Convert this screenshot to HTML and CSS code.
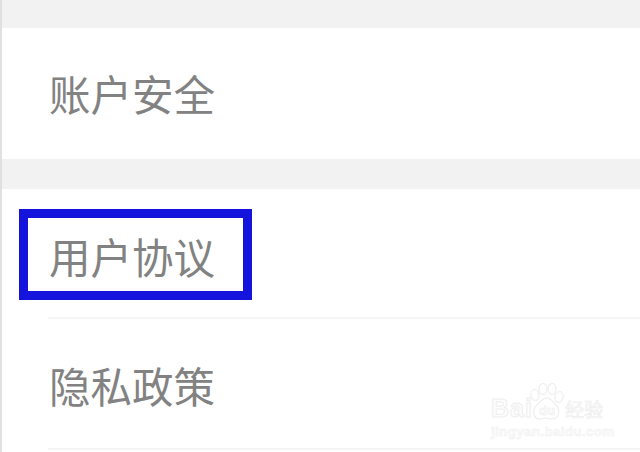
FILE: index.html
```html
<!DOCTYPE html>
<html lang="zh-CN">
<head>
<meta charset="utf-8">
<title>设置</title>
<link rel="stylesheet" href="styles.css">
</head>
<body>
<main class="screen">
  <div class="band band-top"></div>
  <section class="group group-one">
    <div class="row row-first">账户安全</div>
  </section>
  <div class="band band-mid"></div>
  <section class="group">
    <div class="row row-agreement">
      <span class="row-text">用户协议</span>
      <span class="highlight"></span>
    </div>
    <div class="divider"></div>
    <div class="row row-privacy">隐私政策</div>
    <div class="divider divider-last"></div>
  </section>
  <div class="watermark" aria-label="Baidu经验 jingyan.baidu.com">
    <div class="wm-top">
      <span class="wm-bai">Bai</span>
      <svg class="wm-paw" viewBox="0 0 36 38" width="36" height="38">
        <g fill="#fff" stroke="#f0f0f0" stroke-width="1.4">
          <ellipse cx="6" cy="12" rx="4" ry="5.5" transform="rotate(-15 6 12)"/>
          <ellipse cx="14" cy="6" rx="4" ry="5.5"/>
          <ellipse cx="23" cy="6" rx="4" ry="5.5"/>
          <ellipse cx="30" cy="14" rx="4" ry="5.5" transform="rotate(15 30 14)"/>
          <path d="M18 15c4 0 6 4 9 7 4 4 4 14-4 14-3 0-4-1-6-1s-3 1-6 1c-7 0-8-9-4-13 3-3 6-8 11-8z"/>
        </g>
        <text x="18" y="32" class="wm-du">du</text>
      </svg>
      <span class="wm-jy">经验</span>
    </div>
    <div class="wm-url">jingyan.baidu.com</div>
  </div>
</main>
</body>
</html>
```

FILE: styles.css
```css
* { box-sizing: border-box; }
html, body { margin: 0; padding: 0; background: #fff; }
.screen {
  position: relative;
  width: 640px;
  height: 452px;
  overflow: hidden;
  background: #fff;
  border-left: 2px solid #e0e0e0;
  font-family: "Noto Sans CJK SC", "Noto Sans", sans-serif;
}
.band { background: #f2f2f2; }
.band-top { height: 28px; }
.band-mid { height: 30px; }
.group-one { height: 131px; }
.row {
  display: flex;
  align-items: center;
  padding-left: 47px;
  font-size: 41.5px;
  font-weight: 400;
  line-height: 48px;
  color: #828282;
}
.row-first { height: 131px; padding-bottom: 2px; }
.row-agreement { position: relative; height: 128px; padding-top: 6px; }
.row-privacy { height: 129px; padding-top: 2px; }
.highlight {
  position: absolute;
  left: 17px;
  top: 20px;
  width: 233px;
  height: 91px;
  border: 9px solid #1414dc;
}
.divider { height: 2px; margin-left: 46px; background: #f5f5f5; }
.watermark {
  position: absolute;
  left: 489px;
  top: 383px;
  width: 120px;
  color: #fff;
}
.wm-top { display: flex; align-items: flex-end; height: 38px; }
.wm-bai {
  width: 38px;
  font: bold 25px/26px "Liberation Sans", sans-serif;
  letter-spacing: 1px;
  color: #fdfdfd;
  -webkit-text-stroke: 1px #efefef;
}
.wm-paw { flex: none; }
.wm-du {
  font: bold 13px "Liberation Sans", sans-serif;
  text-anchor: middle;
  fill: #fff;
  stroke: #ececec;
  stroke-width: 0.6;
}
.wm-jy {
  font-size: 19px;
  line-height: 24px;
  color: #fcfcfc;
  -webkit-text-stroke: 0.6px #ececec;
}
.wm-url {
  margin-top: 3px;
  font: bold 13.5px/15px "Liberation Sans", sans-serif;
  letter-spacing: 0.3px;
  white-space: nowrap;
  color: #fbfbfb;
  -webkit-text-stroke: 0.5px #f0f0f0;
}
```
